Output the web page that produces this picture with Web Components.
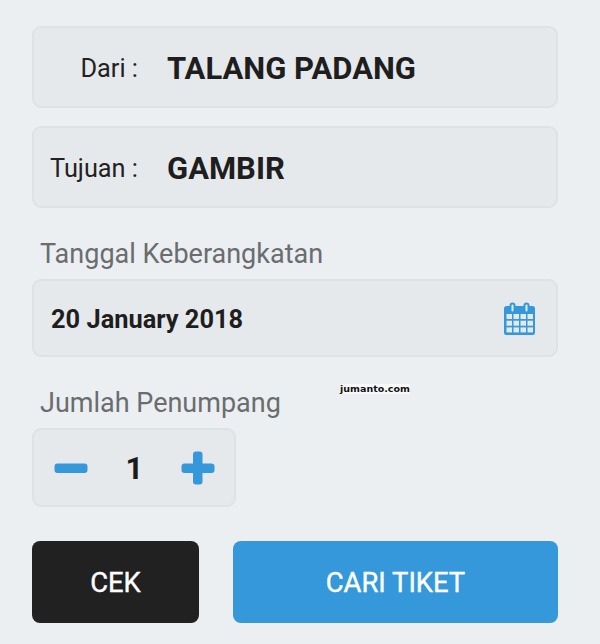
<!DOCTYPE html>
<html lang="id"><head><meta charset="utf-8"><title>Cari Tiket</title>
<style>
html,body{margin:0;background:#ebeff2}
body{font-family:Roboto,"Liberation Sans",sans-serif;color:#1e1e1e;width:600px;height:644px;overflow:hidden}
</style></head><body>
<ticket-form></ticket-form>
<script>
function def(name, css, html){
  customElements.define(name, class extends HTMLElement{
    constructor(){super();const t=document.createElement('template');
      t.innerHTML='<style>'+css+'</style>'+html;
      this.attachShadow({mode:'open'}).appendChild(t.content.cloneNode(true));}
  });
}
def('station-row',`
:host{display:flex;align-items:center;box-sizing:border-box;height:82px;background:#e6e9ec;border:2px solid #dee2e5;border-radius:9px;padding-top:2px}
.l{width:104px;text-align:right;font-size:25.300px;color:#222;flex:none}
.v{margin-left:29px;font-size:31px;font-weight:700;color:#1e1e1e;white-space:nowrap}
`,`<div class="l"><slot name="label"></slot></div><div class="v"><slot></slot></div>`);
def('field-label',`
:host{display:block;font-size:27px;line-height:30px;color:#6a6c6e;padding-left:8px}
`,`<slot></slot>`);
def('date-field',`
:host{display:flex;align-items:center;justify-content:space-between;box-sizing:border-box;height:78px;background:#e6e9ec;border:2px solid #dee2e5;border-radius:9px;padding:2px 21px 0 17px;font-size:25.400px;font-weight:700;color:#1e1e1e}
svg{display:block;margin-top:-2px}
`,`<slot></slot><svg width="31" height="33" viewBox="0.500 0 31 33" aria-hidden="true">
<path d="M3 4h26a2.500 2.500 0 0 1 2.500 2.500v24a2.500 2.500 0 0 1-2.500 2.500H3a2.500 2.500 0 0 1-2.500-2.500v-24A2.500 2.500 0 0 1 3 4z" fill="#3498db"/>
<rect x="6" y="0.500" width="6" height="10" rx="3" fill="#3498db"/>
<rect x="20" y="0.500" width="6" height="10" rx="3" fill="#3498db"/>
<rect x="8" y="2.500" width="2" height="7" rx="1" fill="#dfeaf3"/>
<rect x="22" y="2.500" width="2" height="7" rx="1" fill="#dfeaf3"/>
<g fill="#e3e8ec">
<rect x="3" y="12" width="5.500" height="5"/><rect x="10" y="12" width="5.500" height="5"/><rect x="17" y="12" width="5.500" height="5"/><rect x="24" y="12" width="5.500" height="5"/>
<rect x="3" y="18.700" width="5.500" height="5"/><rect x="10" y="18.700" width="5.500" height="5"/><rect x="17" y="18.700" width="5.500" height="5"/><rect x="24" y="18.700" width="5.500" height="5"/>
<rect x="3" y="25.400" width="5.500" height="5"/><rect x="10" y="25.400" width="5.500" height="5"/><rect x="17" y="25.400" width="5.500" height="5"/><rect x="24" y="25.400" width="5.500" height="5"/>
</g></svg>`);
def('pax-stepper',`
:host{display:flex;align-items:center;box-sizing:border-box;width:204px;height:79px;background:#e6e9ec;border:2px solid #dee2e5;border-radius:9px;padding-left:20px;font-size:31px;font-weight:700;color:#1a1a1a}
svg{display:block;flex:none}
.n{width:93px;text-align:center;padding-top:2px}
`,`<svg width="34" height="34" viewBox="0 0 34 34" aria-hidden="true"><rect x="0.500" y="12.500" width="33" height="9.500" rx="3" fill="#3498db"/></svg>
<div class="n"><slot></slot></div>
<svg width="34" height="34" viewBox="0 0 34 34" aria-hidden="true"><rect x="0.500" y="12.500" width="33" height="9.500" rx="3" fill="#3498db"/><rect x="12" y="0.500" width="9.500" height="33" rx="3" fill="#3498db"/></svg>`);
def('action-button',`
:host{display:flex;align-items:center;justify-content:center;box-sizing:border-box;height:82px;padding-top:1px;border-radius:8px;color:#fff;font-size:27.400px;font-weight:400;-webkit-text-stroke:0.4px #fff;background:var(--bg)}
`,`<slot></slot>`);
def('water-mark',`
:host{display:inline-block;background:#f6f8fa;font-family:"DejaVu Sans",sans-serif;font-weight:700;font-size:9.500px;line-height:10px;color:#111;width:70px;text-align:center;box-sizing:border-box;white-space:nowrap}
`,`<slot></slot>`);
def('ticket-form',`
:host{display:flex;flex-direction:column;box-sizing:border-box;width:600px;height:644px;padding:26px 42px 0 32px}
.gap{height:18px}
.lab{margin-top:31px;margin-bottom:-1px}
.date{margin-top:11px}
.pr{display:flex;align-items:center;margin-top:31px;margin-bottom:-1px;height:30px}
.pr water-mark{margin-top:-29px}
.pr field-label{width:300px}
pax-stepper{margin-top:11px}
.btns{display:flex;justify-content:space-between;margin-top:34px}
.cek{width:167px;--bg:#212121}
.cari{width:325px;--bg:#3498db}
`,`<station-row><span slot="label">Dari :</span>TALANG PADANG</station-row>
<div class="gap"></div>
<station-row><span slot="label">Tujuan :</span>GAMBIR</station-row>
<field-label class="lab">Tanggal Keberangkatan</field-label>
<date-field class="date">20 January 2018</date-field>
<div class="pr"><field-label>Jumlah Penumpang</field-label><water-mark>jumanto.com</water-mark></div>
<pax-stepper>1</pax-stepper>
<div class="btns"><action-button class="cek">CEK</action-button><action-button class="cari">CARI TIKET</action-button></div>`);
</script></body></html>
